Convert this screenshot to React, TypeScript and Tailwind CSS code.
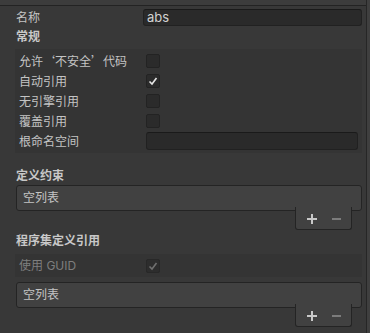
import React from 'react';

const font = { fontFamily: 'Inter, "Noto Sans CJK SC", sans-serif' };

function Check({ on, dim }: { on?: boolean; dim?: boolean }) {
  return (
    <div className="w-[14px] h-[14px] rounded-[2px] bg-[#2b2b2b] border border-[#232323] flex items-center justify-center">
      {on && (
        <svg width="10" height="10" viewBox="0 0 10 10">
          <polyline
            points="1.5,5.5 4,8 8.5,2"
            fill="none"
            stroke={dim ? '#8a8a8a' : '#e6e6e6'}
            strokeWidth="1.6"
          />
        </svg>
      )}
    </div>
  );
}

function Row({ label, children }: { label: string; children?: React.ReactNode }) {
  return (
    <div className="h-[20px] flex items-center">
      <div className="w-[127px] text-[12px] text-[#c4c4c4] leading-[16px] font-['Noto_Sans_CJK_SC',sans-serif]">{label}</div>
      {children}
    </div>
  );
}

function EmptyList() {
  return (
    <div className="flex flex-col">
      <div className="ml-[1px] h-[26px] bg-[#414141] border border-[#242424] rounded-[3px] flex items-center pl-[6px] text-[12px] text-[#c4c4c4]">
        空列表
      </div>
      <div className="relative -mt-[4px] self-end mr-[10px] w-[57px] h-[23px] bg-[#414141] border border-t-0 border-[#242424] rounded-b-[3px] flex items-end pb-[5px]">
        <div className="ml-[11px] w-[10px] h-[10px] relative">
          <div className="absolute left-[4px] top-0 w-[2px] h-[10px] bg-[#c8c8c8]" />
          <div className="absolute left-0 top-[4px] w-[10px] h-[2px] bg-[#c8c8c8]" />
        </div>
        <div className="ml-[15px] mb-[4px] w-[9px] h-[2px] bg-[#7c7c7c]" />
      </div>
    </div>
  );
}

export default function App() {
  return (
    <div className="w-[370px] h-[333px] bg-[#383838] flex overflow-hidden" style={font}>
      <div className="flex-1 flex flex-col">
        <div className="h-[5px] bg-[#3c3c3c]" />
        <div className="h-[1px] bg-[#232323]" />
        <div className="pl-[15px] pr-[4px] flex flex-col">
          {/* name */}
          <div className="mt-[3px] h-[17px] flex items-center">
            <div className="w-[128px] pl-[1px] text-[12px] text-[#c4c4c4]">名称</div>
            <div className="flex-1 h-[17px] bg-[#2a2a2a] border border-[#212121] border-t-[#1a1a1a] rounded-[3px] flex items-center pl-[3px] text-[13px] text-[#d2d2d2]">
              abs
            </div>
          </div>

          <div className="mt-[3px] pl-[1px] h-[16px] leading-[16px] text-[12px] font-bold text-[#c8c8c8]">常规</div>

          <div className="mt-[4px] bg-[#343434] pt-[2px] pb-[2px] pl-[4px] pr-[4px] flex flex-col">
            <Row label="允许‘不安全’代码">
              <Check />
            </Row>
            <Row label="自动引用">
              <Check on />
            </Row>
            <Row label="无引擎引用">
              <Check />
            </Row>
            <Row label="覆盖引用">
              <Check />
            </Row>
            <Row label="根命名空间">
              <div className="flex-1 h-[18px] bg-[#2a2a2a] border border-[#212121] border-t-[#1a1a1a] rounded-[3px]" />
            </Row>
          </div>

          <div className="mt-[15px] pl-[1px] h-[16px] leading-[16px] text-[12px] font-bold text-[#c8c8c8]">定义约束</div>
          <div className="mt-[1px]">
            <EmptyList />
          </div>

          <div className="mt-[3px] pl-[1px] h-[16px] leading-[16px] text-[12px] font-bold text-[#c8c8c8]">程序集定义引用</div>
          <div className="mt-[5px] h-[23px] bg-[#343434] pl-[4px] flex items-center">
            <div className="w-[127px] text-[12px] text-[#7e7e7e]">使用 GUID</div>
            <div className="opacity-70">
              <Check on dim />
            </div>
          </div>
          <div className="mt-[5px]">
            <EmptyList />
          </div>
        </div>
      </div>
      <div className="w-[1px] bg-[#262626]" />
      <div className="w-[3px] bg-[#3f3f3f]" />
    </div>
  );
}
